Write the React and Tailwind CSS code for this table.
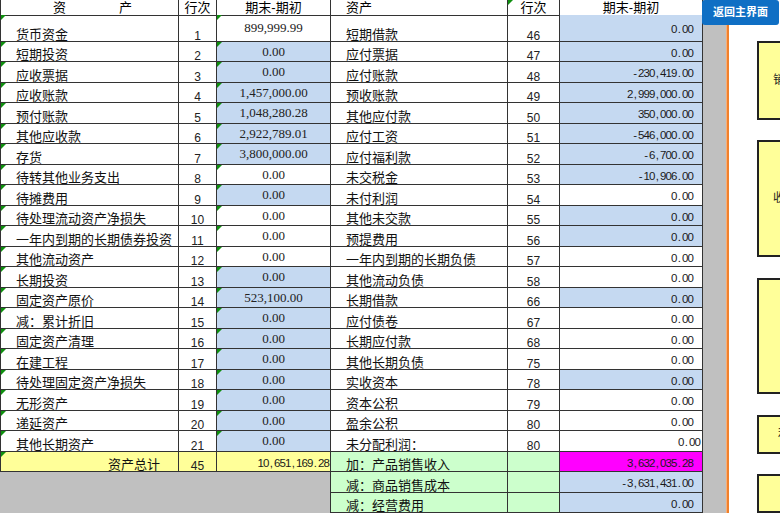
import React from "react";

// 资产负债表 rows: left side (asset) + right side (liability)
const rows = [
  { a: "货币资金", n: 1, v: "899,999.99", vb: false, d: "短期借款", m: 46, f: "0.00", fb: true },
  { a: "短期投资", n: 2, v: "0.00", vb: true, d: "应付票据", m: 47, f: "0.00", fb: true },
  { a: "应收票据", n: 3, v: "0.00", vb: true, d: "应付账款", m: 48, f: "-230,419.00", fb: true },
  { a: "应收账款", n: 4, v: "1,457,000.00", vb: true, d: "预收账款", m: 49, f: "2,999,000.00", fb: true },
  { a: "预付账款", n: 5, v: "1,048,280.28", vb: true, d: "其他应付款", m: 50, f: "350,000.00", fb: true },
  { a: "其他应收款", n: 6, v: "2,922,789.01", vb: true, d: "应付工资", m: 51, f: "-546,000.00", fb: true },
  { a: "存货", n: 7, v: "3,800,000.00", vb: true, d: "应付福利款", m: 52, f: "-6,700.00", fb: true },
  { a: "待转其他业务支出", n: 8, v: "0.00", vb: false, d: "未交税金", m: 53, f: "-10,906.00", fb: true },
  { a: "待摊费用", n: 9, v: "0.00", vb: true, d: "未付利润", m: 54, f: "0.00", fb: false },
  { a: "待处理流动资产净损失", n: 10, v: "0.00", vb: false, d: "其他未交款", m: 55, f: "0.00", fb: true },
  { a: "一年内到期的长期债券投资", n: 11, v: "0.00", vb: false, d: "预提费用", m: 56, f: "0.00", fb: true },
  { a: "其他流动资产", n: 12, v: "0.00", vb: false, d: "一年内到期的长期负债", m: 57, f: "0.00", fb: false },
  { a: "长期投资", n: 13, v: "0.00", vb: true, d: "其他流动负债", m: 58, f: "0.00", fb: false },
  { a: "固定资产原价", n: 14, v: "523,100.00", vb: true, d: "长期借款", m: 66, f: "0.00", fb: true },
  { a: "减：累计折旧", n: 15, v: "0.00", vb: true, d: "应付债卷", m: 67, f: "0.00", fb: false },
  { a: "固定资产清理", n: 16, v: "0.00", vb: true, d: "长期应付款", m: 68, f: "0.00", fb: false },
  { a: "在建工程", n: 17, v: "0.00", vb: true, d: "其他长期负债", m: 75, f: "0.00", fb: false },
  { a: "待处理固定资产净损失", n: 18, v: "0.00", vb: true, d: "实收资本", m: 78, f: "0.00", fb: true },
  { a: "无形资产", n: 19, v: "0.00", vb: true, d: "资本公积", m: 79, f: "0.00", fb: false },
  { a: "递延资产", n: 20, v: "0.00", vb: true, d: "盈余公积", m: 80, f: "0.00", fb: false },
  { a: "其他长期资产", n: 21, v: "0.00", vb: true, d: "未分配利润：", m: 80, f: "0.00", fb: false, edge: true },
];

const grid = "grid grid-cols-[179px_38px_114px_177px_52px_143px]";
const line = "border-r border-b border-[#333]";
const cjk = "font-['Liberation_Sans','Noto_Sans_CJK_SC',sans-serif]";

function Tick() {
  return (
    <span className="absolute left-0 top-0 w-0 h-0 border-t-[5px] border-t-[#0f8f0f] border-r-[5px] border-r-transparent" />
  );
}

function Name({ children, tick, className = "" }) {
  return (
    <div className={`relative flex items-end ${line} ${className}`}>
      {tick && <Tick />}
      <span className={`${cjk} text-[13px] leading-[14px] text-[#111] whitespace-nowrap translate-y-[1px]`}>{children}</span>
    </div>
  );
}

function Num({ children, className = "" }) {
  return (
    <div className={`flex items-end justify-center ${line} ${className}`}>
      <span className="font-['Liberation_Sans',sans-serif] text-[12px] leading-[12px] text-[#222] translate-y-[1px]">{children}</span>
    </div>
  );
}

// 宋体半角数字：每个字符占固定 5.5px
function Money({ children, className = "" }) {
  return (
    <div className={`flex items-center justify-end ${line} ${className}`}>
      <span className="flex font-['Liberation_Sans',sans-serif] text-[11.5px] leading-[14px] text-[#1a1a1a] translate-y-[1px]">
        {children.split("").map((ch, i) => (
          <span key={i} className="inline-block w-[5.5px] text-center">{ch}</span>
        ))}
      </span>
    </div>
  );
}

export default function App() {
  return (
    <div className="relative flex w-[780px] h-[513px] overflow-hidden bg-white">
      <div className="flex flex-col w-[703px] shrink-0">
        {/* header */}
        <div className={`${grid} h-[15px]`}>
          <div className={`flex items-start pl-[52px] border-l ${line}`}>
            <span className={`${cjk} text-[13px] leading-[15px] mr-[53px]`}>资</span>
            <span className={`${cjk} text-[13px] leading-[15px]`}>产</span>
          </div>
          <div className={`flex justify-center ${line}`}>
            <span className={`${cjk} text-[13px] leading-[15px]`}>行次</span>
          </div>
          <div className={`flex justify-center ${line}`}>
            <span className={`${cjk} text-[13px] leading-[15px]`}>期末-期初</span>
          </div>
          <div className={`flex pl-[15px] ${line}`}>
            <span className={`${cjk} text-[13px] leading-[15px]`}>资产</span>
          </div>
          <div className={`relative flex justify-center ${line}`}>
            <Tick />
            <span className={`${cjk} text-[13px] leading-[15px]`}>行次</span>
          </div>
          <div className={`flex justify-center ${line}`}>
            <span className={`${cjk} text-[13px] leading-[15px]`}>期末-期初</span>
          </div>
        </div>

        {rows.map((r, i) => (
          <div
            key={r.n}
            className={`${grid} ${i === 0 ? "h-[27px]" : i % 2 === 1 ? "h-[20px]" : "h-[21px]"}`}
          >
            <Name tick className="border-l pl-[15px]">{r.a}</Name>
            <Num>{r.n}</Num>
            <div className={`relative flex items-center justify-center ${line} ${r.vb ? "bg-[#c5d9f1]" : ""}`}>
              <Tick />
              <span className="font-['Liberation_Serif',serif] text-[13px] leading-[14px] text-[#222]">{r.v}</span>
            </div>
            <Name className="pl-[15px]">{r.d}</Name>
            <Num>{r.m}</Num>
            <Money className={`${r.edge ? "pr-[2px]" : "pr-[9px]"} ${r.fb ? "bg-[#c5d9f1]" : ""}`}>{r.f}</Money>
          </div>
        ))}

        {/* 资产总计 */}
        <div className={`${grid} h-[20px]`}>
          <Name tick className="border-l pl-[107px] bg-[#ffff99]">资产总计</Name>
          <Num className="bg-[#ffff99]">45</Num>
          <Money className="pr-[1px] bg-[#ffff99]">10,651,169.28</Money>
          <Name className="pl-[15px] bg-[#ccffcc]">加：产品销售收入</Name>
          <div className={`bg-[#ccffcc] ${line}`} />
          <Money className="pr-[9px] bg-[#ff00ff]">3,632,035.28</Money>
        </div>

        <div className={`${grid} h-[21px]`}>
          <div className="col-span-3 bg-[#c0c0c0] border-r border-[#333]" />
          <Name className="pl-[15px] bg-[#ccffcc]">减：商品销售成本</Name>
          <div className={`bg-[#ccffcc] ${line}`} />
          <Money className="pr-[9px] bg-[#c5d9f1]">-3,631,431.00</Money>
        </div>

        <div className={`${grid} h-[20px]`}>
          <div className="col-span-3 bg-[#c0c0c0] border-r border-[#333]" />
          <Name className="pl-[15px] bg-[#ccffcc]">减：经营费用</Name>
          <div className={`bg-[#ccffcc] ${line}`} />
          <Money className="pr-[9px] bg-[#c5d9f1]">0.00</Money>
        </div>
      </div>

      <div className="w-[23px] shrink-0 bg-[#c0c0c0]" />
      <div className="w-[3px] shrink-0 bg-[#f0802c] border-l border-[#f6b07a]" />

      {/* 右侧导航框 */}
      <div className="flex flex-col pl-[28px] pt-[41px] shrink-0">
        <div className="w-[100px] h-[83px] flex items-center pl-[14px] bg-[#ffff99] border-2 border-[#222]">
          <span className={`${cjk} text-[12px] text-[#222] whitespace-nowrap`}>销售收入</span>
        </div>
        <div className="w-[100px] h-[123px] mt-[20px] flex items-center pl-[14px] bg-[#ffff99] border-2 border-[#222]">
          <span className={`${cjk} text-[12px] text-[#222] whitespace-nowrap`}>收入</span>
        </div>
        <div className="w-[100px] h-[122px] mt-[21px] bg-[#ffff99] border-2 border-[#222]" />
        <div className="w-[100px] h-[41px] mt-[21px] flex items-center pl-[19px] bg-[#ffff99] border-2 border-[#222]">
          <span className={`${cjk} text-[12px] text-[#222] whitespace-nowrap`}>利润</span>
        </div>
        <div className="w-[100px] h-[41px] mt-[20px] bg-[#ffff99] border-2 border-[#222]" />
      </div>

      <button className="absolute left-[702px] top-0 w-[77px] h-[25px] rounded-[3px] bg-[#0f6fc4] flex items-center justify-center">
        <span className={`${cjk} text-[11px] font-bold text-white leading-none`}>返回主界面</span>
      </button>
    </div>
  );
}
